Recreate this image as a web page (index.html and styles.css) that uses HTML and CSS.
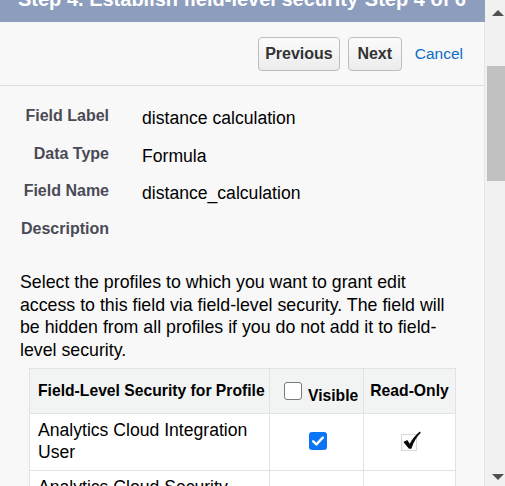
FILE: index.html
```html
<!DOCTYPE html>
<html>
<head>
<meta charset="utf-8">
<link rel="stylesheet" href="styles.css">
</head>
<body>
<div class="frame">
  <div class="main">
    <div class="page-header">
      <div class="page-header-line">
        <span class="title">Step 4. Establish field-level security</span>
        <span class="step">Step 4 of 6</span>
      </div>
    </div>
    <div class="body">
      <div class="btnbar">
        <button class="btn">Previous</button>
        <button class="btn">Next</button>
        <a class="cancel">Cancel</a>
      </div>
      <div class="fields">
        <div class="label">Field Label</div><div class="value">distance calculation</div>
        <div class="label">Data Type</div><div class="value">Formula</div>
        <div class="label">Field Name</div><div class="value">distance_calculation</div>
        <div class="label">Description</div><div class="value"></div>
      </div>
      <p class="intro">Select the profiles to which you want to grant edit access to this field via field-level security. The field will be hidden from all profiles if you do not add it to field-level security.</p>
      <div class="fls">
        <div class="th th-name">Field-Level Security for Profile</div>
        <div class="th th-visible"><span class="cb"></span><span class="th-visible-text">Visible</span></div>
        <div class="th th-ro">Read-Only</div>

        <div class="td td-name">Analytics Cloud Integration User</div>
        <div class="td td-center"><span class="cb cb-checked"><svg width="18" height="18" viewBox="0 0 18 18"><path d="M4.2 9.3 L7.4 12.4 L13.8 5.6" fill="none" stroke="#fff" stroke-width="2.4" stroke-linecap="round" stroke-linejoin="round"/></svg></span></div>
        <div class="td td-center"><svg class="rocheck" width="20" height="21" viewBox="0 0 20 21"><rect x="0.5" y="3.5" width="15" height="16" fill="none" stroke="#b0b0b0" stroke-dasharray="1 1"/><path d="M2.4 11 L6.2 9 L8.8 12.8 C11 8.4 14 4.4 18.8 0.6 L19.8 1.8 C15.6 6 12.6 11 10.4 17.8 L8 17.8 Z" fill="#0a0a0a"/></svg></div>

        <div class="td td-name">Analytics Cloud Security User</div>
        <div class="td td-center"></div>
        <div class="td td-center"></div>
      </div>
    </div>
  </div>
  <div class="scrollbar">
    <div class="arrow-up"></div>
    <div class="thumb"></div>
    <div class="sb-space"></div>
    <div class="arrow-down"></div>
  </div>
</div>
</body>
</html>
```

FILE: styles.css
```css
html, body {
  margin: 0;
  padding: 0;
}
body {
  font-family: "Liberation Sans", Arial, sans-serif;
  background: #f8f8f8;
}
.frame {
  display: flex;
  width: 505px;
  height: 486px;
  overflow: hidden;
}
.main {
  width: 485px;
  flex: none;
  background: #f8f8f8;
}
.page-header {
  height: 22px;
  overflow: hidden;
  background: #8d9dbe;
}
.page-header-line {
  display: flex;
  justify-content: space-between;
  padding: 0 19px 0 18px;
  margin-top: -12px;
  line-height: 22px;
  font-size: 20px;
  font-weight: bold;
  color: #fff;
  white-space: nowrap;
}
.body {
  border-right: 1px solid #e6e6e6;
}
.btnbar {
  height: 63px;
  border-bottom: 1px solid #dcdcdc;
  display: flex;
  justify-content: flex-end;
  align-items: center;
  padding-right: 21px;
}
.btn {
  height: 34px;
  min-width: 54px;
  padding: 0 6px;
  margin: 0 8px 0 0;
  border: 1px solid #bdbdbd;
  border-radius: 4px;
  background: linear-gradient(#fbfbfb, #ececec);
  font-family: "Liberation Sans", Arial, sans-serif;
  font-size: 16px;
  font-weight: bold;
  color: #333;
}
.cancel {
  margin-left: 5px;
  font-size: 15.5px;
  color: #0b6bc4;
}
.fields {
  display: grid;
  grid-template-columns: 109px 1fr;
  grid-auto-rows: 37.7px;
  column-gap: 33px;
  padding-top: 11px;
}
.label {
  text-align: right;
  font-size: 16px;
  line-height: 22px;
  font-weight: bold;
  color: #4a4a56;
  padding-top: 8px;
}
.value {
  font-size: 17.6px;
  line-height: 22px;
  color: #000;
  padding-top: 10px;
}
.intro {
  margin: 23.5px 0 0 0;
  padding: 0 30px 0 20px;
  font-size: 17.75px;
  line-height: 22.5px;
  color: #000;
}
.fls {
  display: grid;
  grid-template-columns: 240px 94px 92px;
  width: 426px;
  margin: 6.3px 0 0 29px;
  border-left: 1px solid #e0e3e5;
  border-top: 1px solid #e0e3e5;
  background: #fff;
}
.th, .td {
  border-right: 1px solid #e0e3e5;
  border-bottom: 1px solid #e0e3e5;
  box-sizing: border-box;
}
.th {
  height: 45px;
  background: #f2f4f4;
  padding: 11px 0 0 0;
  font-size: 15.7px;
  line-height: 22.5px;
  font-weight: bold;
  color: #000;
  white-space: nowrap;
}
.th-name {
  padding-left: 8px;
}
.th-visible {
  display: flex;
  align-items: flex-start;
  padding-left: 14px;
}
.th-visible .cb {
  margin-top: 2px;
}
.th-visible-text {
  margin-left: 6px;
  padding-top: 5px;
}
.th-ro {
  text-align: center;
}
.cb {
  display: inline-block;
  width: 18px;
  height: 18px;
  box-sizing: border-box;
  border: 1.5px solid #7a7a7a;
  border-radius: 3px;
  background: #fff;
}
.cb-checked {
  border: none;
  background: #0b75f5;
  margin-left: 3px;
}
.cb-checked svg {
  display: block;
}
.td {
  height: 57px;
  padding: 5px 9px 6px 8px;
  font-size: 17.6px;
  line-height: 22.5px;
  color: #000;
}
.td-center {
  display: flex;
  align-items: center;
  justify-content: center;
}
.rocheck {
  display: block;
  margin-left: 3px;
}
.scrollbar {
  width: 20px;
  flex: none;
  background: #f1f1f1;
  display: flex;
  flex-direction: column;
}
.arrow-up {
  width: 0;
  height: 0;
  margin: 10px 0 0 7px;
  border-left: 6px solid transparent;
  border-right: 6px solid transparent;
  border-bottom: 6px solid #505050;
}
.thumb {
  width: 18px;
  height: 115px;
  margin: 50px 0 0 2px;
  background: #c1c1c1;
}
.sb-space {
  flex: 1;
}
.arrow-down {
  width: 0;
  height: 0;
  margin: 0 0 6px 7px;
  border-left: 6px solid transparent;
  border-right: 6px solid transparent;
  border-top: 6px solid #505050;
}
```
